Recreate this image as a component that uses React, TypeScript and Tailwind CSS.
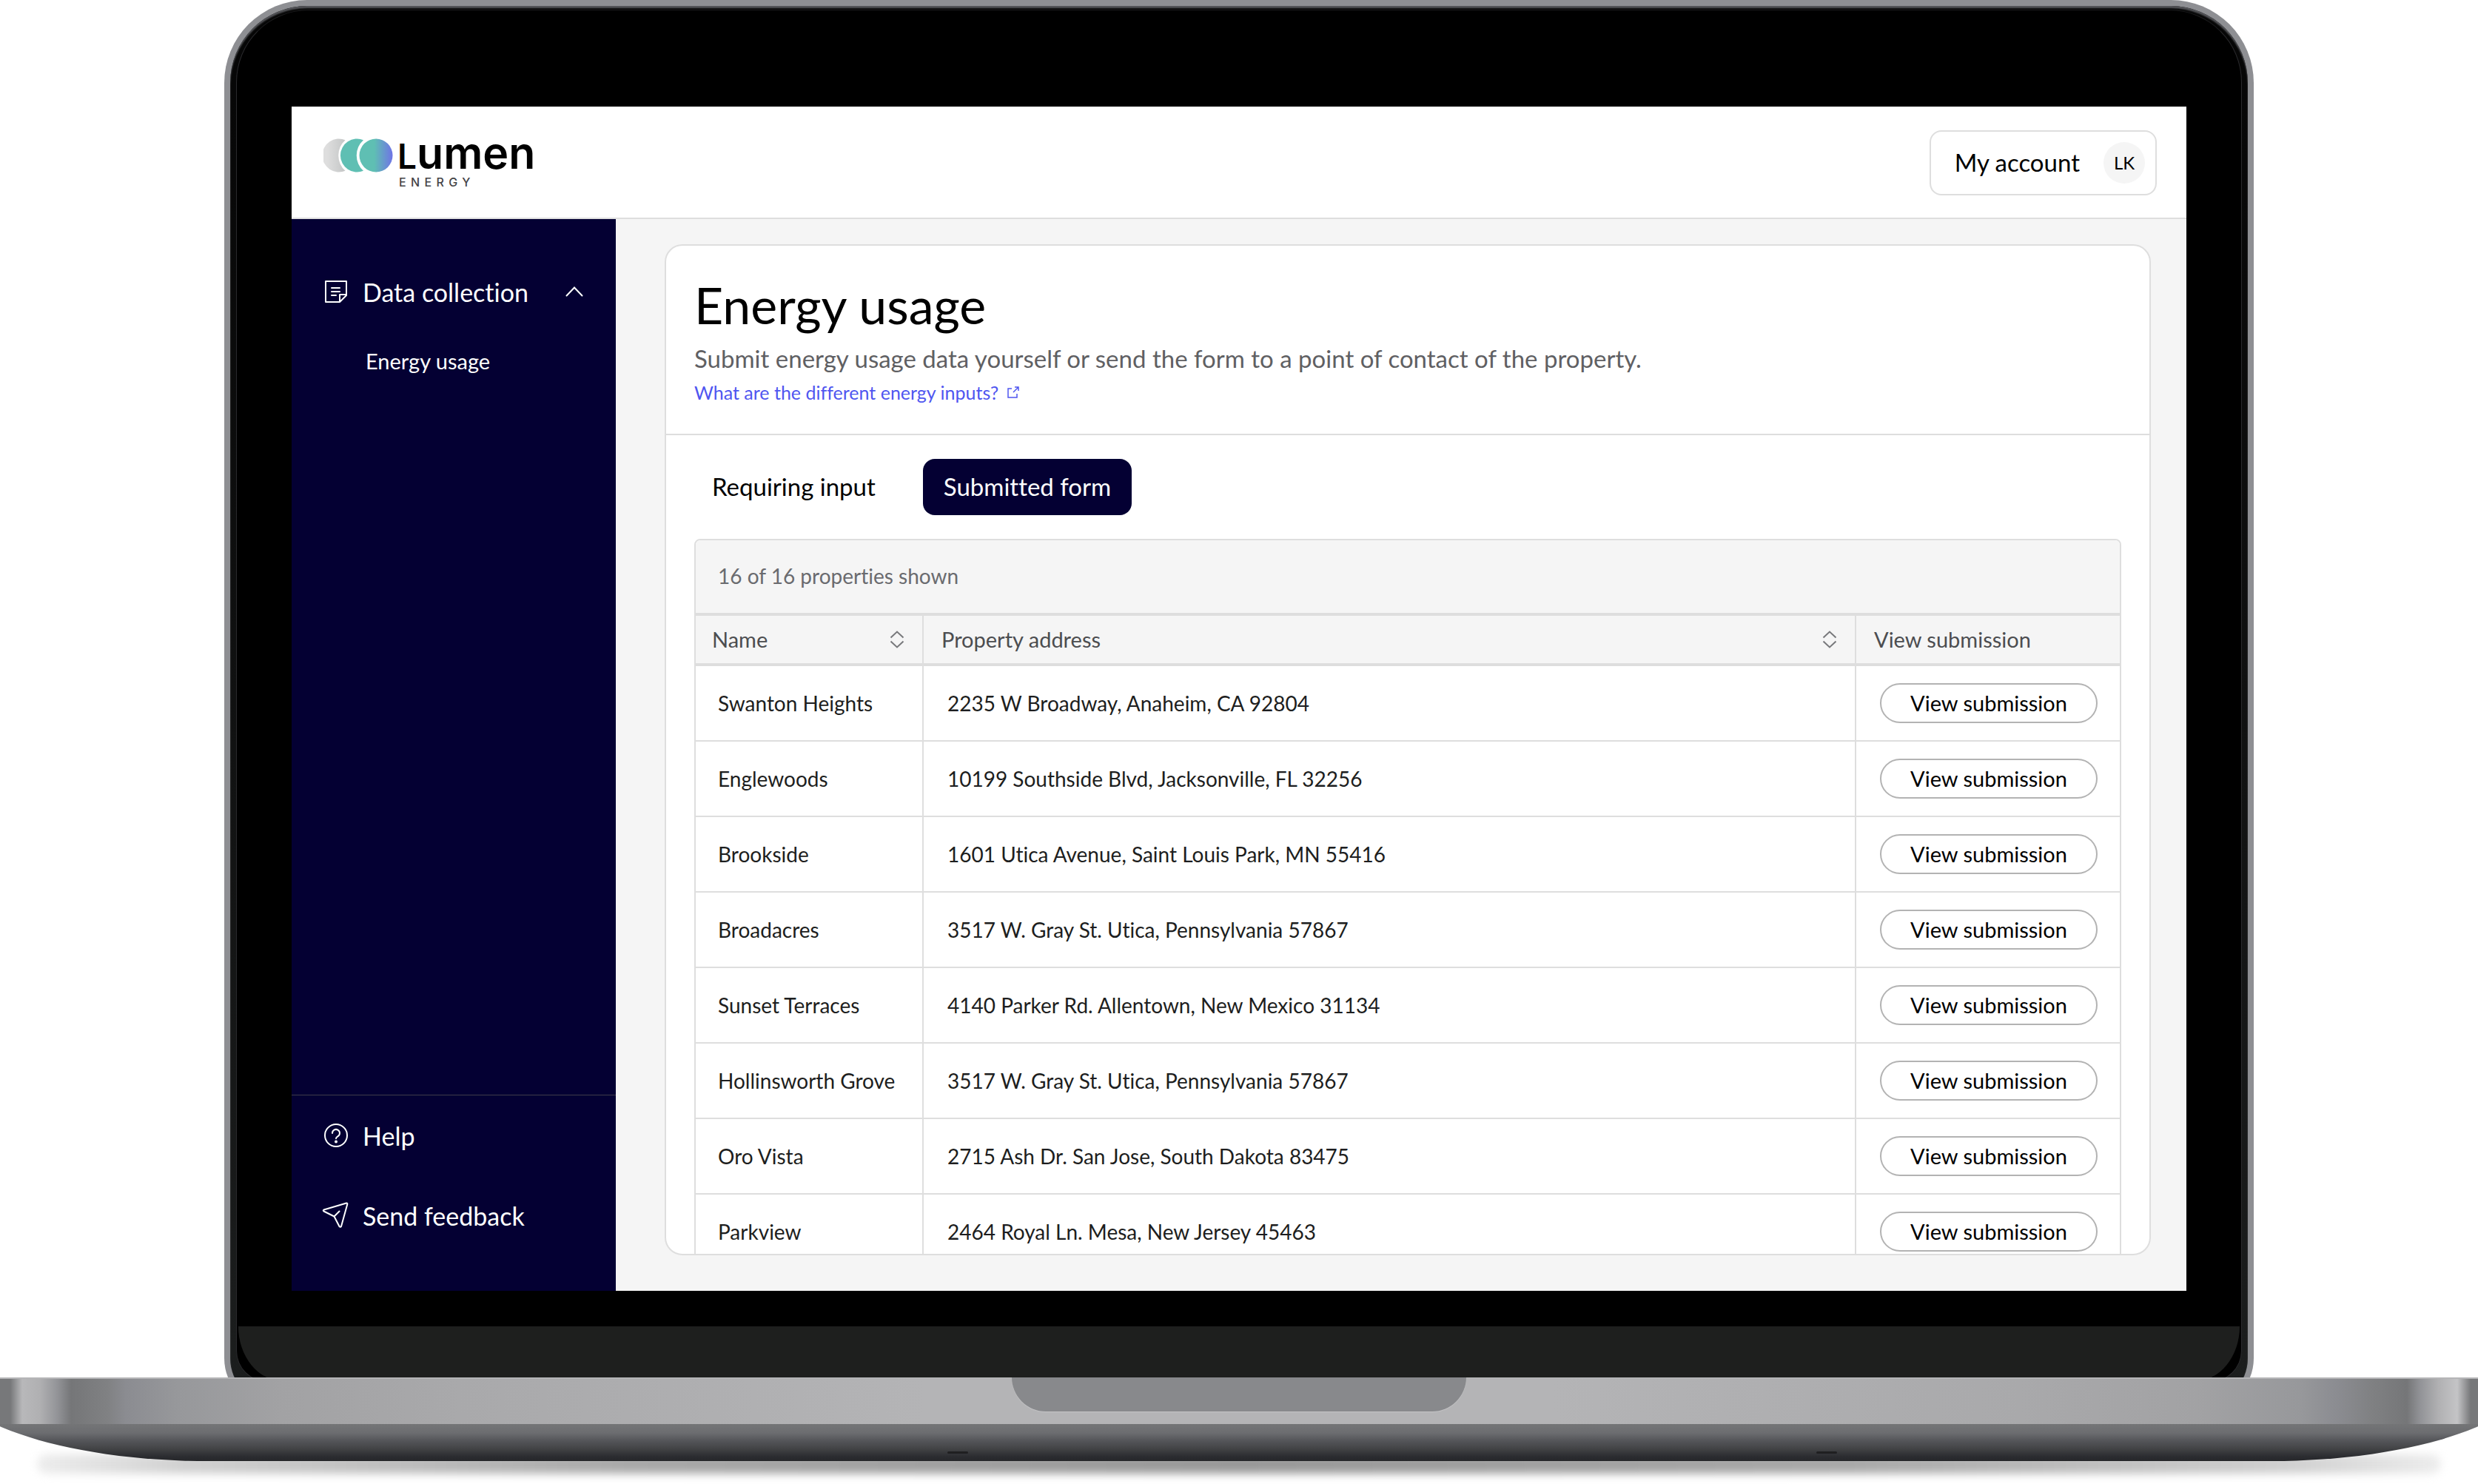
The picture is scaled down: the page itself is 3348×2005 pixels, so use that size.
const rows = [
  ["Swanton Heights", "2235 W Broadway, Anaheim, CA 92804"],
  ["Englewoods", "10199 Southside Blvd, Jacksonville, FL 32256"],
  ["Brookside", "1601 Utica Avenue, Saint Louis Park, MN 55416"],
  ["Broadacres", "3517 W. Gray St. Utica, Pennsylvania 57867"],
  ["Sunset Terraces", "4140 Parker Rd. Allentown, New Mexico 31134"],
  ["Hollinsworth Grove", "3517 W. Gray St. Utica, Pennsylvania 57867"],
  ["Oro Vista", "2715 Ash Dr. San Jose, South Dakota 83475"],
  ["Parkview", "2464 Royal Ln. Mesa, New Jersey 45463"],
];

function LogoMark() {
  return (
    <svg className="mt-1.5 h-[46px] w-[94px]" viewBox="0 0 94 46" aria-hidden="true">
      <defs>
        <linearGradient id="moon" x1="0" x2="1">
          <stop offset="0.2" stopColor="#dedede" />
          <stop offset="1" stopColor="#c4c6c6" />
        </linearGradient>
        <linearGradient id="sun" x1="0" x2="1">
          <stop offset="0.45" stopColor="#5fbfb3" />
          <stop offset="1" stopColor="#6f74e6" />
        </linearGradient>
      </defs>
      <path d="M29.5 2.2A22.5 22.5 0 1 0 29.5 43.8A28 28 0 0 1 29.5 2.2Z" fill="url(#moon)" />
      <path d="M54 2.2A22.5 22.5 0 1 0 54 43.8A28 28 0 0 1 54 2.2Z" fill="#5fbfb3" />
      <circle cx="71" cy="23" r="22.5" fill="url(#sun)" />
    </svg>
  );
}

function NoteIcon() {
  return (
    <svg className="size-8" viewBox="0 0 32 32" fill="none" stroke="currentColor" strokeWidth="2" strokeLinejoin="round" strokeLinecap="round" aria-hidden="true">
      <path d="M2 2H30V21L21 30H2Z M30 20H21V30 M10 11H21 M10 16H21 M10 21H16" />
    </svg>
  );
}

function HelpIcon() {
  return (
    <svg className="size-8" viewBox="0 0 32 32" fill="none" stroke="currentColor" strokeWidth="2" strokeLinecap="round" aria-hidden="true">
      <circle cx="16" cy="16" r="15" />
      <path d="M11 13a5 5 0 1 1 7.600 4.200c-1.800 1.100-2.600 1.500-2.600 3.100" />
      <circle cx="16" cy="24.500" r="2" fill="currentColor" stroke="none" />
    </svg>
  );
}

function SendIcon() {
  return (
    <svg className="size-8 overflow-visible" viewBox="0 0 32 32" fill="none" stroke="currentColor" strokeWidth="2" strokeLinejoin="round" strokeLinecap="round" aria-hidden="true">
      <path d="M30 -0.500L-0.500 8.500Q-2 9.400 -0.500 10.500L13.500 17.500L20.500 31Q22 32.500 23 31L31.300 1Q31.500 -0.700 30 -0.500Z M13.500 17.500L20.500 10.500" />
    </svg>
  );
}

function SortIcon() {
  return (
    <svg className="h-6 w-5" viewBox="0 0 20 24" fill="none" stroke="#77787b" strokeWidth="2" aria-hidden="true">
      <path d="M1.500 9.500L10 1.500L18.500 9.500 M1.500 14.500L10 22.500L18.500 14.500" />
    </svg>
  );
}

function Header() {
  return (
    <header className="flex h-[152px] shrink-0 items-center justify-between border-b-2 border-[#dedede] bg-white pt-[2px] pr-10 pl-[43px]">
      <a href="#home" aria-label="Lumen Energy" className="flex items-start gap-1.5 pb-1 font-[Inter,sans-serif]">
        <LogoMark />
        <span className="flex flex-col">
          <span className="text-[59px] leading-[52px] font-semibold text-black">
            <span className="text-[46px]">L</span>umen
          </span>
          <span className="pl-0.5 text-[16px] leading-[18px] font-medium tracking-[0.4em] text-[#444446]">ENERGY</span>
        </span>
      </a>
      <button type="button" className="flex h-[88px] items-center gap-8 rounded-2xl border-2 border-[#dedede] bg-white pr-3.5 pl-8 text-[33px] text-black">
        My account
        <span className="flex size-14 items-center justify-center rounded-full bg-[#f5f5f5] text-[24px]">LK</span>
      </button>
    </header>
  );
}

function Sidebar() {
  return (
    <aside className="flex w-[438px] shrink-0 flex-col bg-[#040033] text-[34px] text-white">
      <nav className="flex flex-1 flex-col pt-[66px]">
        <button type="button" aria-expanded="true" className="flex h-16 items-center pr-11 pl-11">
          <NoteIcon />
          <span className="ml-5">Data collection</span>
          <svg className="ml-auto h-4 w-6" viewBox="0 0 24 16" fill="none" stroke="currentColor" strokeWidth="2" strokeLinecap="round" aria-hidden="true">
            <path d="M1.500 13.500L12 2.500L22.500 13.500" />
          </svg>
        </button>
        <a href="#energy" className="mt-8 pl-[100px] text-[29px] leading-[60px]">Energy usage</a>
      </nav>
      <div className="flex flex-col border-t border-[#3d3d48] pb-12">
        <a href="#help" className="flex h-[108px] items-center gap-5 pl-11">
          <HelpIcon />
          Help
        </a>
        <a href="#feedback" className="flex h-[108px] items-center gap-5 pl-11">
          <SendIcon />
          Send feedback
        </a>
      </div>
    </aside>
  );
}

function PropertyTable() {
  return (
    <div className="mt-8 overflow-hidden rounded-t-lg border-2 border-[#dedede] text-[28px]">
      <table className="w-full table-fixed border-separate border-spacing-0 text-left">
        <caption className="h-[102px] border-b-4 border-[#dedede] bg-[#f5f5f5] pl-[30px] text-left leading-[96px] text-[#6a6b6f]">
          16 of 16 properties shown
        </caption>
        <colgroup>
          <col className="w-[308px]" />
          <col />
          <col className="w-[356px]" />
        </colgroup>
        <thead>
          <tr className="h-[68px] bg-[#f5f5f5] text-[29px] text-[#4c4d50]">
            <th scope="col" className="border-r-2 border-b-4 border-[#dedede] p-0 font-normal">
              <button type="button" className="flex w-full items-center justify-between pr-6 pl-[22px]">
                Name
                <SortIcon />
              </button>
            </th>
            <th scope="col" className="border-r-2 border-b-4 border-[#dedede] p-0 font-normal">
              <button type="button" className="flex w-full items-center justify-between px-6">
                Property address
                <SortIcon />
              </button>
            </th>
            <th scope="col" className="border-b-4 border-[#dedede] px-6 py-0 font-normal">View submission</th>
          </tr>
        </thead>
        <tbody>
          {rows.map(([name, address]) => (
            <tr key={name} className="h-[102px] text-[#1d1e20]">
              <td className="border-r-2 border-b-2 border-[#dedede] py-0 pr-2 pl-[30px] whitespace-nowrap">{name}</td>
              <td className="border-r-2 border-b-2 border-[#dedede] px-8 py-0">{address}</td>
              <td className="border-b-2 border-[#dedede] py-0 pr-[30px] pl-8">
                <button type="button" className="flex h-[54px] w-full items-center justify-center rounded-full border-2 border-[#b3b3b3] bg-white text-[29px] text-black">
                  View submission
                </button>
              </td>
            </tr>
          ))}
        </tbody>
      </table>
    </div>
  );
}

function Dashboard() {
  return (
    <div className="flex aspect-[8/5] flex-col overflow-hidden bg-[#f5f5f5]">
      <Header />
      <div className="flex min-h-0 flex-1">
        <Sidebar />
        <main className="flex min-w-0 flex-1 flex-col pt-[34px] pr-12 pb-12 pl-[66px]">
          <section className="min-h-0 flex-1 overflow-hidden rounded-3xl border-2 border-[#dedede] bg-white">
            <div className="border-b-2 border-[#dedede] px-[38px] py-10">
              <h1 className="text-[68px] leading-[80px] text-black">Energy usage</h1>
              <p className="mt-3 text-[33px] leading-[40px] text-[#5f6063]">
                Submit energy usage data yourself or send the form to a point of contact of the property.
              </p>
              <a href="#inputs" className="mt-2.5 flex items-center gap-3 text-[25px] leading-[32px] text-[#4f56f0]">
                What are the different energy inputs?
                <svg className="size-4" viewBox="0 0 16 16" fill="none" stroke="currentColor" strokeWidth="1.500" aria-hidden="true">
                  <path d="M6 3H1V15H13V10 M10 1H15V6 M15 1L8 8" />
                </svg>
              </a>
            </div>
            <div className="px-[38px] pt-8">
              <div role="tablist" className="flex gap-10 text-[33px]">
                <button type="button" role="tab" aria-selected="false" className="h-[76px] rounded-2xl px-6 text-black">Requiring input</button>
                <button type="button" role="tab" aria-selected="true" className="h-[76px] rounded-2xl bg-[#040033] px-7 text-white">Submitted form</button>
              </div>
              <PropertyTable />
            </div>
          </section>
        </main>
      </div>
    </div>
  );
}

function Lid() {
  return (
    <div className="mx-[303px] rounded-t-[112px] rounded-b-[70px] bg-[#8e8f93] p-2">
      <div className="rounded-t-[104px] rounded-b-[62px] bg-linear-to-b from-[#060606] to-[#1c1e1e] px-2 pt-[5px] pb-[30px] shadow-[inset_0_3px_2px_#55565a]">
        <div className="rounded-t-[98px] rounded-b-[42px] border border-[#2a2a2d] border-t-[#1c1c1e] bg-black pt-[130px]">
          <div className="px-[74px] pb-12">
            <Dashboard />
          </div>
          <div className="mx-[2px] h-[74px] bg-[#1e1f1e] [border-radius:0_0_60px_60px/0_0_74px_74px]" />
        </div>
      </div>
    </div>
  );
}

function Base() {
  return (
    <div className="relative -mt-11 pb-[31px]">
      <div className="absolute inset-x-[50px] bottom-[14px] h-[26px] rounded-full bg-[linear-gradient(90deg,#ededed,#d0d0d0_200px,#a8a8a8_800px,#989898_50%,#a8a8a8_calc(100%-800px),#d0d0d0_calc(100%-200px),#ededed)] blur-[6px]" />
      <div className="relative flex h-[63px] justify-center border-t-2 border-[#b5b5b7] bg-[linear-gradient(90deg,#77787a,#77787a_14px,#b8b8ba_30px,#b0b0b2_54px,#929397_78px,#757678_96px,#808183_145px,#8b8c91_170px,#97989b_240px,#a2a2a4_380px,#a9a9ab_620px,#b4b4b6_1250px,#b4b4b6_calc(100%-1250px),#a9a9ab_calc(100%-620px),#a2a2a4_calc(100%-380px),#97989b_calc(100%-240px),#8b8c91_calc(100%-190px),#808183_calc(100%-145px),#757678_calc(100%-96px),#929397_calc(100%-78px),#b0b0b2_calc(100%-54px),#c4c4c6_calc(100%-28px),#77787a_calc(100%-10px),#77787a)]">
        <div className="-mt-[2px] h-[46px] w-[614px] rounded-b-[50px] bg-[#88898c] shadow-[0_1px_1px_#c4c4c6]" />
      </div>
      <div className="relative h-[50px] overflow-hidden">
        <div className="absolute -inset-x-20 bottom-0 h-[126px] bg-[linear-gradient(180deg,#747577_76px,#6c6d70_88px,#55565a_98px,#434446_109px,#2b2c30_120px,#26272a)] [border-radius:0_0_360px_360px/0_0_126px_126px]" />
        <div className="absolute bottom-[10px] left-[1280px] h-[3px] w-[28px] rounded-full bg-[#1f1f21]" />
        <div className="absolute right-[866px] bottom-[10px] h-[3px] w-[28px] rounded-full bg-[#1f1f21]" />
      </div>
    </div>
  );
}

export default function App() {
  return (
    <div className="overflow-hidden bg-white font-[Lato,sans-serif] [font-variant-ligatures:none]">
      <Lid />
      <Base />
    </div>
  );
}
